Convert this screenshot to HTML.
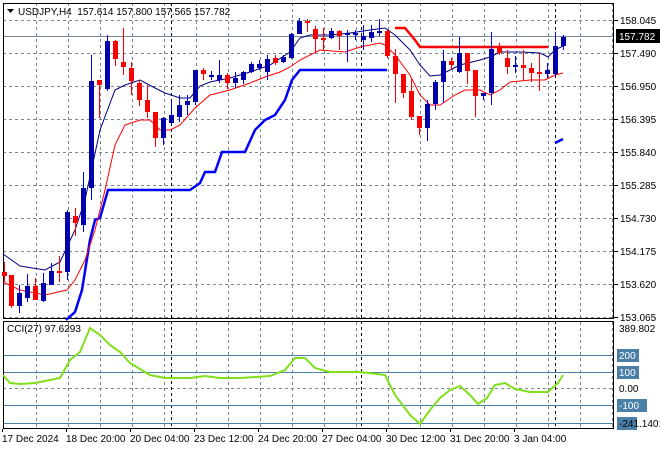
<!DOCTYPE html>
<html><head><meta charset="utf-8"><style>
html,body{margin:0;padding:0;background:#fff;width:660px;height:450px;overflow:hidden}
svg text{font-family:"Liberation Sans",sans-serif;font-size:10px}
</style></head><body>
<svg id="s" width="660" height="450" xmlns="http://www.w3.org/2000/svg"></svg>
<script>
var s=document.getElementById('s'),h='';
function L(x1,y1,x2,y2,c,w,d){h+='<line x1="'+x1+'" y1="'+y1+'" x2="'+x2+'" y2="'+y2+'" stroke="'+c+'" stroke-width="'+(w||1)+'"'+(d?' stroke-dasharray="'+d+'"':'')+'/>';}
function P(pts,c,w){h+='<polyline fill="none" stroke="'+c+'" stroke-width="'+w+'" points="'+pts.map(function(p){return p.join(',')}).join(' ')+'"/>';}
function T(x,y,t,c,a){h+='<text x="'+x+'" y="'+y+'" fill="'+(c||'#000')+'"'+(a?' text-anchor="'+a+'"':'')+'>'+t+'</text>';}
var g='#7a8593';
[20,53,86,119,152,185,218,251,284,317].forEach(function(y){L(3,y+.5,614,y+.5,g,1,'3,3');});
L(3,388.5,614,388.5,g,1,'3,3');
for(var x=36;x<614;x+=32){L(x+.5,3,x+.5,318,g,1,'3,3');L(x+.5,322,x+.5,428,g,1,'3,3');}
[171,361,555].forEach(function(x){L(x+.5,3,x+.5,428,'#000',1,'3,3');});
[355,372,405,423].forEach(function(y){L(3,y+.5,614,y+.5,'#4a7fa8',1);});
L(3,36.5,614,36.5,'#778899',1);
h+='<rect x="3.5" y="3.5" width="610" height="315" fill="none" stroke="#000"/>';
h+='<rect x="3.5" y="321.5" width="610" height="107" fill="none" stroke="#000"/>';
P([[66,320],[75,312],[82,290],[90,240],[95,220],[100,218],[108,190],[125,190],[190,190],[200,183],[205,172],[215,172],[222,152],[245,152],[255,130],[265,120],[275,115],[285,100],[292,80],[300,70],[387,70]],'#0000ff',2.5);
P([[555,143],[563,139]],'#0000ff',2.5);
P([[395,28],[405,28],[415,40],[420,47],[548,47]],'#ff0000',2.5);
P([[3,254],[20,266],[45,270],[60,262],[75,230],[85,200],[100,130],[115,90],[125,85],[140,80],[155,88],[165,93],[180,98],[190,98],[200,86],[210,82],[230,78],[250,72],[270,65],[290,52],[300,38],[310,35],[330,35],[350,33],[370,30],[385,28],[395,35],[410,50],[420,65],[430,76],[440,75],[460,65],[480,60],[490,57],[500,52],[520,52],[540,53],[548,57],[555,50],[565,45]],'#000080',1);
P([[3,282],[20,290],[45,295],[67,290],[75,280],[85,260],[95,230],[105,190],[115,145],[125,125],[140,120],[150,120],[160,130],[170,130],[180,125],[195,108],[210,95],[230,90],[250,83],[265,77],[280,72],[290,67],[300,60],[320,50],[345,52],[360,47],[380,43],[385,45],[395,55],[410,75],[420,95],[430,105],[440,105],[455,95],[465,90],[480,90],[490,95],[500,90],[510,82],[530,80],[545,80],[555,75],[563,73]],'#ff0000',1);
var C=[[4,272,276,262,282],[11,275,306,275,308],[19,306,293,285,313],[27,298,286,274,302],[35,286,300,278,300],[43,301,283,273,302],[51,285,271,263,285],[59,271,272,256,282],[67,272,212,210,280],[75,216,223,208,236],[83,225,188,172,232],[91,188,81,55,200],[99,80,85,80,118],[107,89,41,35,91],[115,41,59,40,66],[123,62,67,28,75],[131,68,81,62,95],[139,83,100,80,106],[147,100,112,85,118],[155,112,138,112,147],[163,138,118,117,145],[171,123,115,100,125],[179,117,105,95,122],[187,105,101,95,115],[195,102,70,70,105],[203,70,74,68,80],[211,76,75,71,80],[219,80,75,60,83],[227,75,83,73,89],[235,83,78,72,88],[243,80,72,71,84],[251,72,64,62,73],[259,68,64,60,70],[267,72,59,55,80],[275,58,63,55,65],[283,62,57,55,63],[291,58,34,33,59],[299,34,21,18,34],[307,21,22,19,32],[315,29,39,26,52],[323,38,38,28,51],[331,38,31,28,39],[339,31,36,30,50],[347,35,33,30,62],[355,35,33,30,40],[363,40,36,25,50],[371,38,32,25,42],[379,33,31,19,36],[387,31,56,30,58],[395,56,74,49,103],[403,74,93,74,98],[411,91,117,79,120],[419,116,128,116,135],[427,128,104,100,141],[435,104,82,80,110],[443,82,61,50,103],[451,61,65,58,70],[459,72,53,37,73],[467,53,71,53,84],[475,70,96,70,117],[483,96,93,93,100],[491,93,49,32,105],[499,48,53,43,55],[507,58,67,50,74],[515,67,65,56,73],[523,65,68,50,80],[531,68,73,63,82],[539,72,73,53,91],[547,74,70,63,78],[555,74,46,32,76],[563,46,37,35,50]];
C.forEach(function(c){var bull=c[2]<c[1],lc=bull?'#0000ff':'#ff0000';
L(c[0]+.5,c[3],c[0]+.5,c[4],lc,1);var t=Math.min(c[1],c[2]),b=Math.max(c[1],c[2]);if(b-t<2)b=t+2;
h+='<rect x="'+(c[0]-2)+'" y="'+t+'" width="5" height="'+(b-t)+'" fill="'+(bull?'#0000aa':'#ff0000')+'"/>';});
P([[3,375],[10,383],[20,384],[35,383],[50,380],[60,378],[70,360],[80,352],[90,328],[100,335],[110,345],[120,352],[130,363],[150,375],[165,378],[190,378],[205,376],[220,378],[240,378],[270,376],[285,370],[295,358],[305,358],[315,368],[330,372],[360,372],[385,375],[395,395],[410,415],[420,424],[430,410],[440,398],[450,390],[460,386],[470,395],[478,404],[487,398],[495,385],[505,383],[515,389],[530,392],[548,392],[558,383],[563,375]],'#7fe01a',2);
var pl=['158.045','157.490','156.950','156.395','155.840','155.285','154.730','154.175','153.620','153.065'];
pl.forEach(function(t,i){var y=[20,53,86,119,152,185,218,251,284,317][i];L(614,y+.5,618,y+.5,'#000');T(620,y+4,t);});
h+='<rect x="616" y="29" width="44" height="14" fill="#000"/>';T(619,40,'157.782','#fff');
T(619,332,'389.802');
[[200,355],[100,372],[-100,405]].forEach(function(a){var w=a[0]<0?30:22;h+='<rect x="617" y="'+(a[1]-6)+'" width="'+w+'" height="13" fill="#4a7fa8"/>';T(619,a[1]+4,a[0],'#fff');});
T(619,392,'0.00');
h+='<rect x="617" y="417" width="20" height="13" fill="#4a7fa8"/>';T(619,427,'-241.1401');
h+='<polygon points="7,9 14,9 10.5,13" fill="#000"/>';T(18,15,'USDJPY,H4&#160; 157.614 157.800 157.565 157.782');
T(7,332,'CCI(27) 97.6293');
[[2,'17 Dec 2024'],[66,'18 Dec 20:00'],[130,'20 Dec 04:00'],[194,'23 Dec 12:00'],[258,'24 Dec 20:00'],[322,'27 Dec 04:00'],[386,'30 Dec 12:00'],[450,'31 Dec 20:00'],[514,'3 Jan 04:00']].forEach(function(d){T(d[0],442,d[1]);L(d[0]+.5,429,d[0]+.5,432,'#000');});
s.innerHTML=h;
</script>
</body></html>
